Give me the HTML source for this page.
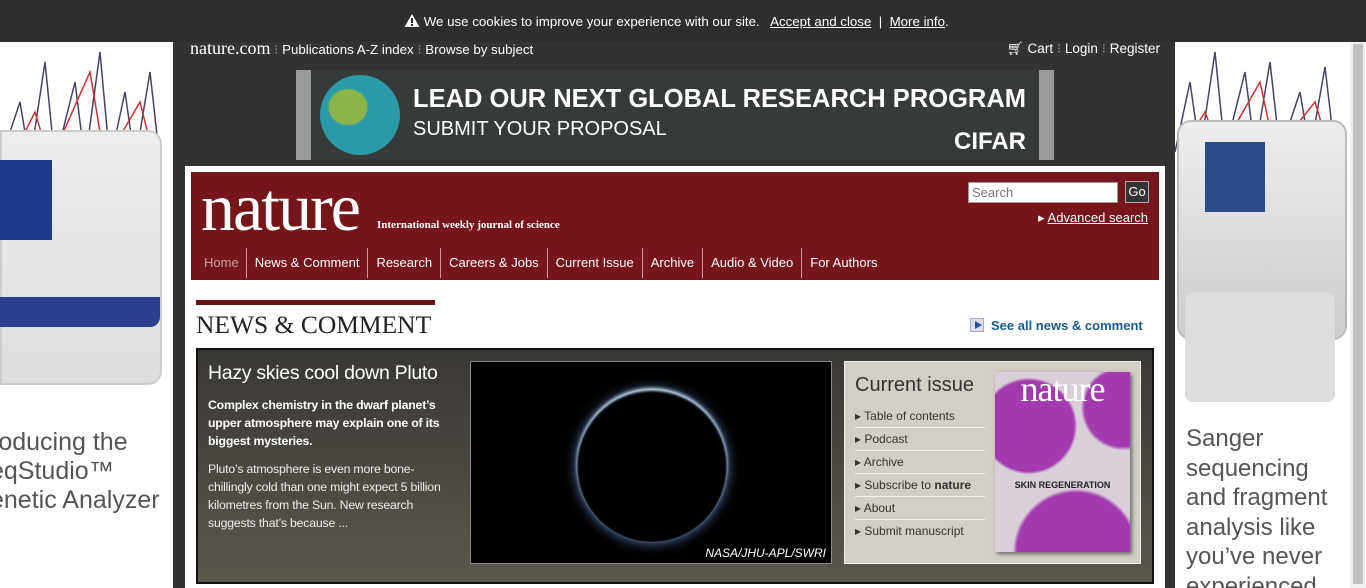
<!DOCTYPE html>
<html><head><meta charset="utf-8"><style>
*{margin:0;padding:0;box-sizing:border-box}
body{width:1366px;height:588px;overflow:hidden;background:#333;font-family:"Liberation Sans",sans-serif;position:relative}
.abs{position:absolute}
a{color:inherit}
</style></head><body>
<div class="abs" style="left:0;top:0;width:1366px;height:42px;background:#2e2e2e;color:#fff;font-size:13.3px">
<div class="abs" style="left:404px;top:13px;white-space:nowrap">
<svg width="16" height="15" style="vertical-align:-2px"><path d="M8 1L15.5 14H.5Z" fill="#fff"/><rect x="7" y="5" width="2" height="5" fill="#2e2e2e"/><rect x="7" y="11" width="2" height="2" fill="#2e2e2e"/></svg>
 We use cookies to improve your experience with our site. &nbsp; <u>Accept and close</u> &nbsp;|&nbsp; <u>More info</u>.</div></div>
<!-- left ad -->
<div class="abs" style="left:0;top:42px;width:173px;height:546px;background:#fff;overflow:hidden">
<svg class="abs" style="left:0;top:0" width="173" height="140"><path d="M0 120 L20 60 L30 120 L45 20 L55 120 L75 40 L85 120 L100 10 L110 120 L125 50 L135 120 L150 30 L160 120" stroke="#446" fill="none" stroke-width="1.5"/><path d="M10 120 L35 70 L50 120 L90 30 L105 120 L140 60 L155 120" stroke="#c33" fill="none" stroke-width="1.5"/></svg>
<div class="abs" style="left:0;top:88px;width:162px;height:255px;background:linear-gradient(#eee,#ddd);border-radius:0 14px 14px 0;border:2px solid #ccc"></div>
<div class="abs" style="left:0;top:118px;width:52px;height:80px;background:#1b3a8a"></div>
<div class="abs" style="left:0;top:255px;width:160px;height:30px;background:#2b3f8f;border-radius:0 0 10px 0"></div>
<div class="abs" style="left:0;top:386px;font-size:25px;color:#555;line-height:29px;white-space:nowrap;margin-left:-10px">roducing the<br>eqStudio™<br>enetic Analyzer</div>
</div>
<!-- right ad -->
<div class="abs" style="left:1175px;top:42px;width:175px;height:546px;background:#fff;overflow:hidden">
<svg class="abs" style="left:0;top:0" width="175" height="140"><path d="M0 110 L15 40 L25 110 L40 10 L50 110 L70 30 L80 110 L95 20 L105 110 L125 50 L135 110 L150 25 L160 110" stroke="#446" fill="none" stroke-width="1.5"/><path d="M5 110 L30 70 L45 110 L85 40 L100 110 L140 60 L155 110" stroke="#c33" fill="none" stroke-width="1.5"/></svg>
<div class="abs" style="left:2px;top:78px;width:170px;height:220px;background:linear-gradient(#eee,#ccc);border-radius:14px;border:2px solid #bbb"></div>
<div class="abs" style="left:30px;top:100px;width:60px;height:70px;background:#2a4a8a"></div>
<div class="abs" style="left:10px;top:250px;width:150px;height:110px;background:#ddd;border-radius:8px"></div>
<div class="abs" style="left:11px;top:382px;font-size:24px;color:#555;line-height:29.5px">Sanger sequencing and fragment analysis like you’ve never experienced</div>
</div>
<div class="abs" style="left:1350px;top:42px;width:16px;height:546px;background:#f0f0f0"><div style="margin:2px 3px;height:540px;background:#c1c1c1"></div></div>
<!-- top links -->
<div class="abs" style="left:190px;top:38px;color:#fff;font-size:13.3px;white-space:nowrap"><span style="font-family:'Liberation Serif',serif;font-size:18px">nature.com</span> <span style="color:#888">⁝</span> Publications A-Z index <span style="color:#888">⁝</span> Browse by subject</div>
<div class="abs" style="right:206px;top:41px;color:#fff;font-size:13.5px;white-space:nowrap">🛒︎ Cart <span style="color:#888">⁝</span> Login <span style="color:#888">⁝</span> Register</div>
<!-- banner -->
<div class="abs" style="left:296px;top:70px;width:758px;height:90px;background:#363a38">
<div class="abs" style="left:0;top:0;width:15px;height:90px;background:#999"></div>
<div class="abs" style="left:743px;top:0;width:15px;height:90px;background:#999"></div>
<div class="abs" style="left:24px;top:5px;width:80px;height:80px;border-radius:50%;background:radial-gradient(ellipse at 35% 40%,#8bb54a 0 25%,#2b9aa8 28%)"></div>
<div class="abs" style="left:117px;top:15px;color:#fff;font-size:25.5px;font-weight:bold;white-space:nowrap">LEAD OUR NEXT GLOBAL RESEARCH PROGRAM</div>
<div class="abs" style="left:117px;top:48px;color:#fff;font-size:20px;white-space:nowrap">SUBMIT YOUR PROPOSAL</div>
<div class="abs" style="left:658px;top:58px;color:#fff;font-size:24px;font-weight:bold">CIFAR</div>
</div>
<!-- content -->
<div class="abs" style="left:185px;top:166px;width:980px;height:422px;background:#fff">
<div class="abs" style="left:6px;top:6px;width:968px;height:108px;background:#74161a">
<div class="abs" style="left:10px;top:-4px;color:#fff;font-family:'Liberation Serif',serif;font-size:68px;letter-spacing:-2px">nature</div>
<div class="abs" style="left:186px;top:47px;color:#fff;font-family:'Liberation Serif',serif;font-size:11px;font-weight:bold">International weekly journal of science</div>
<div class="abs" style="left:777px;top:10px;width:150px;height:21px;background:#fff;border:1px solid #999;font-size:13px;color:#777;padding:2px 3px">Search</div>
<div class="abs" style="left:934px;top:9px;width:24px;height:22px;background:#333;border:1px solid #aaa;color:#fff;font-size:13px;text-align:center;line-height:20px">Go</div>
<div class="abs" style="right:11px;top:38px;color:#fff;font-size:13px;white-space:nowrap">▸ <u>Advanced search</u></div>
<div class="abs" style="left:0;top:76px;color:#fff;font-size:13px;white-space:nowrap;display:flex;line-height:30px">
<span style="padding:0 7px 0 13px;color:#c9a0a0;border-right:1px solid #c99">Home</span><span style="padding:0 8px;border-right:1px solid #c99">News &amp; Comment</span><span style="padding:0 8px;border-right:1px solid #c99">Research</span><span style="padding:0 8px;border-right:1px solid #c99">Careers &amp; Jobs</span><span style="padding:0 8px;border-right:1px solid #c99">Current Issue</span><span style="padding:0 8px;border-right:1px solid #c99">Archive</span><span style="padding:0 8px;border-right:1px solid #c99">Audio &amp; Video</span><span style="padding:0 8px">For Authors</span></div>
</div>
<div class="abs" style="left:11px;top:134px;width:239px;height:5px;background:#6b1418"></div>
<div class="abs" style="left:11px;top:144px;font-family:'Liberation Serif',serif;font-size:25.5px;color:#222">NEWS &amp; COMMENT</div>
<div class="abs" style="left:785px;top:152px;width:14px;height:14px;border:1px solid #aac;background:#dde"><div style="margin:2px 4px;border-left:7px solid #1a5a9a;border-top:4px solid transparent;border-bottom:4px solid transparent;width:0"></div></div>
<div class="abs" style="left:806px;top:152px;font-size:13px;color:#1a5a8a;font-weight:bold">See all news &amp; comment</div>
<div class="abs" style="left:11px;top:182px;width:958px;height:236px;border:2px solid #111;background:linear-gradient(#3a3835,#5a574d)">
<div class="abs" style="left:10px;top:12px;color:#fff;font-size:19.5px;letter-spacing:-0.3px">Hazy skies cool down Pluto</div>
<div class="abs" style="left:10px;top:46px;width:250px;color:#fff;font-size:12.3px;font-weight:bold;line-height:18px;letter-spacing:-0.2px">Complex chemistry in the dwarf planet’s upper atmosphere may explain one of its biggest mysteries.</div>
<div class="abs" style="left:10px;top:110px;width:250px;color:#eee;font-size:12.3px;line-height:18px;letter-spacing:-0.2px">Pluto’s atmosphere is even more bone-chillingly cold than one might expect 5 billion kilometres from the Sun. New research suggests that’s because ...</div>
<div class="abs" style="left:272px;top:11px;width:362px;height:203px;background:#000;border:1px solid #888">
<div class="abs" style="left:106px;top:28px;width:150px;height:152px;border-radius:50%;box-shadow:0 -2px 3px #cde,0 0 12px #6a8ac8,inset 0 1px 2px #9bd"></div>
<div class="abs" style="right:5px;bottom:3px;color:#fff;font-size:12px;font-style:italic">NASA/JHU-APL/SWRI</div></div>
<div class="abs" style="left:646px;top:11px;width:297px;height:203px;background:#d3cfc6;border:1px solid #eee">
<div class="abs" style="left:10px;top:12px;color:#333;font-size:20px">Current issue</div>
<div class="abs" style="left:10px;top:43px;width:130px;font-size:12px;color:#333;line-height:22px">
<div style="border-bottom:1px solid #f4f2ee">▸ Table of contents</div><div style="border-bottom:1px solid #f4f2ee">▸ Podcast</div><div style="border-bottom:1px solid #f4f2ee">▸ Archive</div><div style="border-bottom:1px solid #f4f2ee">▸ Subscribe to <b>nature</b></div><div style="border-bottom:1px solid #f4f2ee">▸ About</div><div>▸ Submit manuscript</div></div>
<div class="abs" style="left:150px;top:10px;width:135px;height:180px;background:radial-gradient(circle at 25% 30%,#a43ab0 0 28%,transparent 30%),radial-gradient(circle at 95% 20%,#a43ab0 0 20%,transparent 22%),radial-gradient(circle at 60% 100%,#a43ab0 0 30%,transparent 32%),#d8cfd8;box-shadow:2px 2px 4px #666">
<div style="color:#fff;font-family:'Liberation Serif',serif;font-size:36px;text-align:center;margin-top:-4px;letter-spacing:-1px">nature</div>
<div style="color:#222;font-size:9px;font-weight:bold;text-align:center;margin-top:70px">SKIN REGENERATION</div></div>
</div>
</div>
</div>
</body></html>
